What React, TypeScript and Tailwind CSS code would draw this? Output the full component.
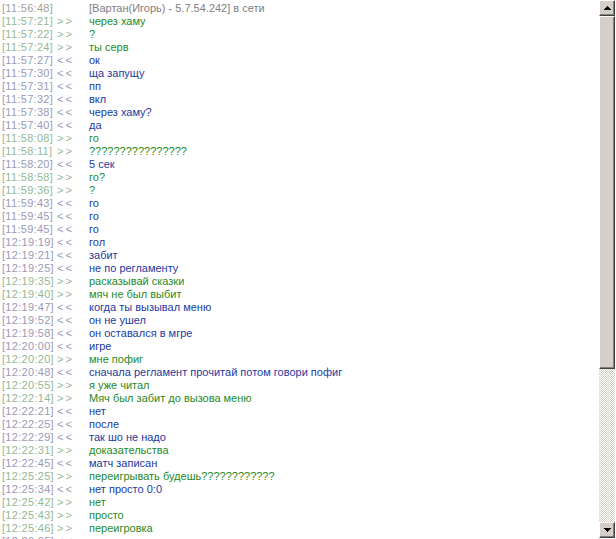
import React from "react";

type Line = { time: string; dir: "in" | "out" | "sys"; text: string };

// log lines, dir "out" = >> (green), "in" = << (blue)
const lines: Line[] = [
  { time: "11:56:48", dir: "sys", text: "[Вартан(Игорь) - 5.7.54.242] в сети" },
  { time: "11:57:21", dir: "out", text: "через хаму" },
  { time: "11:57:22", dir: "out", text: "?" },
  { time: "11:57:24", dir: "out", text: "ты серв" },
  { time: "11:57:27", dir: "in", text: "ок" },
  { time: "11:57:30", dir: "in", text: "ща запущу" },
  { time: "11:57:31", dir: "in", text: "пп" },
  { time: "11:57:32", dir: "in", text: "вкл" },
  { time: "11:57:38", dir: "in", text: "через хаму?" },
  { time: "11:57:40", dir: "in", text: "да" },
  { time: "11:58:08", dir: "out", text: "го" },
  { time: "11:58:11", dir: "out", text: "????????????????" },
  { time: "11:58:20", dir: "in", text: "5 сек" },
  { time: "11:58:58", dir: "out", text: "го?" },
  { time: "11:59:36", dir: "out", text: "?" },
  { time: "11:59:43", dir: "in", text: "го" },
  { time: "11:59:45", dir: "in", text: "го" },
  { time: "11:59:45", dir: "in", text: "го" },
  { time: "12:19:19", dir: "in", text: "гол" },
  { time: "12:19:21", dir: "in", text: "забит" },
  { time: "12:19:25", dir: "in", text: "не по регламенту" },
  { time: "12:19:35", dir: "out", text: "расказывай сказки" },
  { time: "12:19:40", dir: "out", text: "мяч не был выбит" },
  { time: "12:19:47", dir: "in", text: "когда ты вызывал меню" },
  { time: "12:19:52", dir: "in", text: "он не ушел" },
  { time: "12:19:58", dir: "in", text: "он оставался в мгре" },
  { time: "12:20:00", dir: "in", text: "игре" },
  { time: "12:20:20", dir: "out", text: "мне пофиг" },
  { time: "12:20:48", dir: "in", text: "сначала регламент прочитай потом говори пофиг" },
  { time: "12:20:55", dir: "out", text: "я уже читал" },
  { time: "12:22:14", dir: "out", text: "Мяч был забит до вызова меню" },
  { time: "12:22:21", dir: "in", text: "нет" },
  { time: "12:22:25", dir: "in", text: "после" },
  { time: "12:22:29", dir: "in", text: "так шо не надо" },
  { time: "12:22:31", dir: "out", text: "доказательства" },
  { time: "12:22:45", dir: "in", text: "матч записан" },
  { time: "12:25:25", dir: "out", text: "переигрывать будешь????????????" },
  { time: "12:25:34", dir: "in", text: "нет просто 0:0" },
  { time: "12:25:42", dir: "out", text: "нет" },
  { time: "12:25:43", dir: "out", text: "просто" },
  { time: "12:25:46", dir: "out", text: "переигровка" },
  { time: "12:26:05", dir: "in", text: "" },
];

function LogRow({ line }: { line: Line }) {
  const metaColor =
    line.dir === "out"
      ? "text-[#94b894]"
      : line.dir === "in"
      ? "text-[#9a9ab8]"
      : "text-[#a0a0a0]";
  const textColor =
    line.dir === "out"
      ? "text-[#1f8a1f]"
      : line.dir === "in"
      ? "text-[#1c3a9e]"
      : "text-[#808080]";
  return (
    <div className="flex h-[13px] items-center whitespace-nowrap">
      <span className={`w-[55px] shrink-0 tracking-[0.3px] ${metaColor}`}>
        [{line.time}]
      </span>
      <span className={`w-[32px] shrink-0 tracking-[2px] ${metaColor}`}>
        {line.dir === "out" ? ">>" : line.dir === "in" ? "<<" : ""}
      </span>
      <span className={textColor}>{line.text}</span>
    </div>
  );
}

function ScrollButton({ up }: { up?: boolean }) {
  return (
    <div className="flex h-[16px] w-[16px] shrink-0 items-center justify-center bg-[#d4d0c8] border-t border-l border-t-[#ffffff] border-l-[#ffffff] border-r border-b border-r-[#404040] border-b-[#404040] shadow-[inset_-1px_-1px_0_#808080]">
      <svg width="7" height="4" viewBox="0 0 7 4">
        {up ? (
          <path d="M3 0h1v1h1v1h1v1h1v1H0V3h1V2h1V1h1z" fill="#000" />
        ) : (
          <path d="M0 0h7v1H6v1H5v1H4v1H3V3H2V2H1V1H0z" fill="#000" />
        )}
      </svg>
    </div>
  );
}

export default function App() {
  return (
    <div className="flex h-[539px] w-[616px] overflow-hidden bg-white font-['Liberation_Sans',Arial,sans-serif] text-[11px]">
      <div className="flex-1 overflow-hidden pl-[2px] pt-[2px]">
        {lines.map((line, i) => (
          <LogRow key={i} line={line} />
        ))}
      </div>
      <div className="mr-px flex h-[538px] w-[16px] shrink-0 flex-col">
        <ScrollButton up />
        <div className="h-[353px] shrink-0 bg-[#d4d0c8] border-t border-l border-t-[#ffffff] border-l-[#ffffff] border-r border-b border-r-[#404040] border-b-[#404040] shadow-[inset_-1px_-1px_0_#808080]" />
        <div className="flex-1 bg-[repeating-conic-gradient(#d4d0c8_0%_25%,#ffffff_0%_50%)] bg-[length:2px_2px]" />
        <ScrollButton />
      </div>
    </div>
  );
}
